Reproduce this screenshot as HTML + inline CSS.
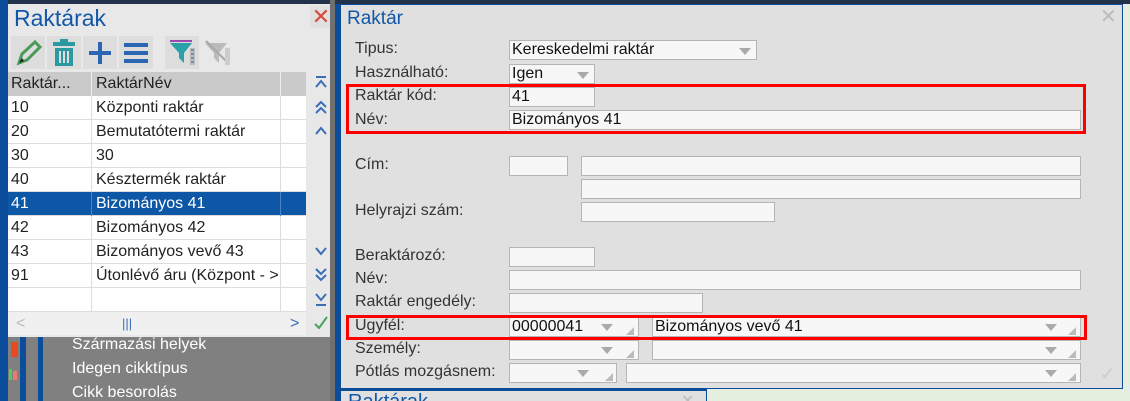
<!DOCTYPE html>
<html><head><meta charset="utf-8"><style>
*{box-sizing:border-box;margin:0;padding:0}
html,body{width:1130px;height:401px;overflow:hidden}
body{position:relative;background:#e4efe0;font-family:"Liberation Sans",sans-serif;font-size:16px;color:#222}
.a{position:absolute}
.inp{position:absolute;background:#f7f7f7;border:1px solid #b5b5b5;height:20px;line-height:18px;padding-left:2px;font-size:16px;color:#111}
.lbl{position:absolute;left:355px;font-size:16px;color:#333}
.dd{position:absolute;width:0;height:0;border-left:6px solid transparent;border-right:6px solid transparent;border-top:7px solid #aaa}
.cr{position:absolute;width:0;height:0;border-left:8px solid transparent;border-bottom:8px solid #bbb}
.row{position:absolute;left:8px;width:298px;height:24px;background:#fff;border-bottom:1px solid #ddd;line-height:23px}
.row span{position:absolute;white-space:nowrap}
.c1{left:3px}.c2{left:88px}
.vl{position:absolute;top:0;width:1px;height:24px;background:#ddd}
.sb{position:absolute;left:309px;width:24px;height:22px;background:#e8e8e8}
.sb svg{position:absolute;left:4px;top:3px}
</style></head><body>
<div class="a" style="left:0;top:0;width:1130px;height:4px;background:#22324a"></div>
<div class="a" style="left:0;top:0;width:8px;height:401px;background:#0b4d9b"></div>
<div class="a" style="left:8px;top:4px;width:326px;height:333px;background:#e8e8e8"></div>
<div class="a" style="left:14px;top:5px;font-size:23px;color:#1157a8">Raktárak</div>
<div class="a" style="left:310px;top:6px;width:22px;height:22px;background:#e0e0e0;color:#d84a3a;font-size:22px;line-height:22px;text-align:center">✕</div>
<div class="a" style="left:11px;top:36px;width:34px;height:33px;background:#ddd"></div>
<svg class="a" style="left:13px;top:38px" width="30" height="30"><path d="M6 25 L9 16 L22 4 L27 9 L14 22 Z" fill="none" stroke="#4a9a5a" stroke-width="3"/><path d="M6 25 L9 20 L11 23Z" fill="#222"/></svg>
<div class="a" style="left:47px;top:36px;width:34px;height:33px;background:#ddd"></div>
<svg class="a" style="left:50px;top:38px" width="28" height="30"><rect x="3" y="4" width="22" height="4" fill="#2a9aa0"/><rect x="10" y="1" width="8" height="4" fill="#2a9aa0"/><rect x="5" y="10" width="18" height="18" fill="#2a9aa0"/><rect x="9" y="13" width="2" height="12" fill="#ddd"/><rect x="13" y="13" width="2" height="12" fill="#ddd"/><rect x="17" y="13" width="2" height="12" fill="#ddd"/></svg>
<div class="a" style="left:83px;top:36px;width:34px;height:33px;background:#ddd"></div>
<svg class="a" style="left:87px;top:40px" width="26" height="26"><path d="M13 2V24M2 13H24" stroke="#2c66b0" stroke-width="4"/></svg>
<div class="a" style="left:119px;top:36px;width:34px;height:33px;background:#ddd"></div>
<svg class="a" style="left:122px;top:40px" width="28" height="26"><path d="M2 5H26M2 13H26M2 21H26" stroke="#2c66b0" stroke-width="4"/></svg>
<div class="a" style="left:165px;top:36px;width:34px;height:33px;background:#ddd"></div>
<svg class="a" style="left:168px;top:38px" width="30" height="30"><path d="M2 3H24" stroke="#9a4ab0" stroke-width="2"/><path d="M2 5H24L16 15V25L11 20V15Z" fill="#2aa0a8"/><rect x="22" y="10" width="5" height="17" fill="#bbb"/><path d="M23 12H26M23 16H26M23 20H26M23 24H26" stroke="#2c66b0"/></svg>
<svg class="a" style="left:203px;top:38px" width="30" height="30"><path d="M2 5H24L16 15V25L11 20V15Z" fill="#bbb"/><path d="M3 3L26 26" stroke="#aaa" stroke-width="2"/><rect x="22" y="10" width="5" height="17" fill="#ccc"/></svg>
<div class="a" style="left:8px;top:72px;width:298px;height:24px;background:#cacaca;line-height:24px">
<span class="a" style="left:3px">Raktár...</span><span class="a" style="left:88px">RaktárNév</span>
<div class="vl" style="left:83px;background:#eee"></div><div class="vl" style="left:272px;background:#eee"></div></div>
<div class="row" style="top:96px"><span class="c1">10</span><span class="c2">Központi raktár</span><div class="vl" style="left:83px"></div><div class="vl" style="left:272px"></div></div>
<div class="row" style="top:120px"><span class="c1">20</span><span class="c2">Bemutatótermi raktár</span><div class="vl" style="left:83px"></div><div class="vl" style="left:272px"></div></div>
<div class="row" style="top:144px"><span class="c1">30</span><span class="c2">30</span><div class="vl" style="left:83px"></div><div class="vl" style="left:272px"></div></div>
<div class="row" style="top:168px"><span class="c1">40</span><span class="c2">Késztermék raktár</span><div class="vl" style="left:83px"></div><div class="vl" style="left:272px"></div></div>
<div class="row" style="top:192px;background:#0e57a6;color:#fff"><span class="c1">41</span><span class="c2">Bizományos 41</span><div class="vl" style="left:83px;background:#4a84c4"></div><div class="vl" style="left:272px;background:#4a84c4"></div></div>
<div class="row" style="top:216px"><span class="c1">42</span><span class="c2">Bizományos 42</span><div class="vl" style="left:83px"></div><div class="vl" style="left:272px"></div></div>
<div class="row" style="top:240px"><span class="c1">43</span><span class="c2">Bizományos vevő 43</span><div class="vl" style="left:83px"></div><div class="vl" style="left:272px"></div></div>
<div class="row" style="top:264px;overflow:hidden"><span class="c1">91</span><span class="c2" style="width:182px;overflow:hidden">Útonlévő áru (Központ - &gt;</span><div class="vl" style="left:83px"></div><div class="vl" style="left:272px"></div></div>
<div class="row" style="top:288px"><div class="vl" style="left:83px"></div><div class="vl" style="left:272px"></div></div>
<div class="a" style="left:8px;top:312px;width:298px;height:23px;background:#f0f0f0;color:#3a6fb5;line-height:23px">
<span class="a" style="left:8px;color:#bbb">&lt;</span><span class="a" style="left:114px;font-size:13px">|||</span><span class="a" style="left:282px">&gt;</span></div>
<div class="sb" style="top:72px"><svg width="16" height="16"><path d="M3 2H13M3 12L8 6L13 12" fill="none" stroke="#3a6fb5" stroke-width="2"/></svg></div>
<div class="sb" style="top:96px"><svg width="16" height="16"><path d="M3 8L8 3L13 8M3 14L8 9L13 14" fill="none" stroke="#3a6fb5" stroke-width="2"/></svg></div>
<div class="sb" style="top:120px"><svg width="16" height="16"><path d="M3 11L8 5L13 11" fill="none" stroke="#3a6fb5" stroke-width="2"/></svg></div>
<div class="sb" style="top:240px"><svg width="16" height="16"><path d="M3 5L8 11L13 5" fill="none" stroke="#3a6fb5" stroke-width="2"/></svg></div>
<div class="sb" style="top:264px"><svg width="16" height="16"><path d="M3 2L8 7L13 2M3 8L8 13L13 8" fill="none" stroke="#3a6fb5" stroke-width="2"/></svg></div>
<div class="sb" style="top:288px"><svg width="16" height="16"><path d="M3 3L8 9L13 3M3 14H13" fill="none" stroke="#3a6fb5" stroke-width="2"/></svg></div>
<div class="sb" style="top:312px"><svg width="16" height="16"><path d="M2 9L6 13L14 2" fill="none" stroke="#4aa060" stroke-width="2"/></svg></div>
<div class="a" style="left:8px;top:337px;width:327px;height:64px;background:#808080"></div>
<div class="a" style="left:20px;top:337px;width:6px;height:64px;background:#0b4d9b"></div>
<div class="a" style="left:38px;top:337px;width:5px;height:64px;background:#0b4d9b"></div>
<div class="a" style="left:11px;top:342px;width:7px;height:15px;background:#e84a20"></div>
<div class="a" style="left:9px;top:369px;width:3px;height:11px;background:#5c5"></div>
<div class="a" style="left:13px;top:371px;width:4px;height:9px;background:#e77"></div>
<div class="a" style="left:72px;top:336px;color:#fff;font-size:16px">Származási helyek</div>
<div class="a" style="left:72px;top:360px;color:#fff;font-size:16px">Idegen cikktípus</div>
<div class="a" style="left:72px;top:384px;color:#fff;font-size:16px">Cikk besorolás</div>
<div class="a" style="left:335px;top:4px;width:788px;height:385px;background:#0b4d9b"></div>
<div class="a" style="left:341px;top:5px;width:781px;height:383px;background:#e0e0e0"></div>
<div class="a" style="left:347px;top:8px;font-size:19px;color:#1157a8">Raktár</div>
<div class="a" style="left:1100px;top:4px;font-size:20px;color:#bbb">✕</div>
<div class="a" style="left:1100px;top:364px;font-size:18px;color:#ccc">✓</div>
<div class="a" style="left:335px;top:389px;width:372px;height:12px;background:#0b4d9b"></div>
<div class="a" style="left:341px;top:391px;width:365px;height:10px;background:#e0e0e0;overflow:hidden"><div class="a" style="left:7px;top:1px;font-size:20px;color:#1157a8;line-height:20px">Raktárak</div><div class="a" style="left:340px;top:0;color:#bbb;font-size:16px">✕</div></div>
<div class="a" style="left:330px;top:0;width:5px;height:401px;background:#707070"></div>
<div class="lbl" style="top:40px">Tipus:</div>
<div class="inp" style="left:509px;top:40px;width:248px">Kereskedelmi raktár</div><div class="dd" style="left:739px;top:48px"></div>
<div class="lbl" style="top:64px">Használható:</div>
<div class="inp" style="left:509px;top:64px;width:86px">Igen</div><div class="dd" style="left:577px;top:72px"></div>
<div class="lbl" style="top:87px">Raktár kód:</div>
<div class="inp" style="left:509px;top:87px;width:86px">41</div>
<div class="lbl" style="top:111px">Név:</div>
<div class="inp" style="left:509px;top:110px;width:572px">Bizományos 41</div>
<div class="lbl" style="top:156px">Cím:</div>
<div class="inp" style="left:509px;top:156px;width:59px"></div>
<div class="inp" style="left:581px;top:156px;width:500px"></div>
<div class="inp" style="left:581px;top:179px;width:500px"></div>
<div class="lbl" style="top:202px">Helyrajzi szám:</div>
<div class="inp" style="left:581px;top:202px;width:194px"></div>
<div class="lbl" style="top:247px">Beraktározó:</div>
<div class="inp" style="left:509px;top:247px;width:86px"></div>
<div class="lbl" style="top:270px">Név:</div>
<div class="inp" style="left:509px;top:270px;width:572px"></div>
<div class="lbl" style="top:293px">Raktár engedély:</div>
<div class="inp" style="left:509px;top:293px;width:194px"></div>
<div class="lbl" style="top:317px">Ügyfél:</div>
<div class="inp" style="left:509px;top:317px;width:130px">00000041</div><div class="dd" style="left:601px;top:324px"></div><div class="cr" style="left:626px;top:327px"></div>
<div class="inp" style="left:652px;top:317px;width:429px">Bizományos vevő 41</div><div class="dd" style="left:1045px;top:324px"></div><div class="cr" style="left:1068px;top:327px"></div>
<div class="lbl" style="top:340px">Személy:</div>
<div class="inp" style="left:509px;top:340px;width:130px"></div><div class="dd" style="left:601px;top:347px"></div><div class="cr" style="left:626px;top:350px"></div>
<div class="inp" style="left:652px;top:340px;width:429px"></div><div class="dd" style="left:1045px;top:347px"></div><div class="cr" style="left:1068px;top:350px"></div>
<div class="lbl" style="top:363px">Pótlás mozgásnem:</div>
<div class="inp" style="left:509px;top:363px;width:108px"></div><div class="dd" style="left:577px;top:370px"></div><div class="cr" style="left:605px;top:373px"></div>
<div class="inp" style="left:626px;top:363px;width:455px"></div><div class="dd" style="left:1045px;top:370px"></div><div class="cr" style="left:1068px;top:373px"></div>
<div class="a" style="left:346px;top:84px;width:740px;height:50px;border:3px solid #f00"></div>
<div class="a" style="left:346px;top:315px;width:741px;height:25px;border:3px solid #f00"></div>
</body></html>
